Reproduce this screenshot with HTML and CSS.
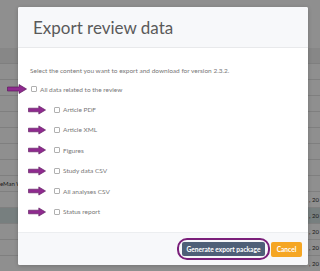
FILE: index.html
```html
<!DOCTYPE html>
<html lang="en">
<head>
    <meta charset="UTF-8">
    <meta name="viewport" content="width=device-width, initial-scale=1.0">
    <title>Export review data</title>
    <link rel="stylesheet" href="styles.css">
</head>
<body>
    <div class="page">
        <div class="topbar"></div>
        <div class="table">
            <div class="row head"><span class="cell-left"></span><span class="cell-right"></span></div>
            <div class="row"><span class="cell-left"></span><span class="cell-right"></span></div>
            <div class="row"><span class="cell-left"></span><span class="cell-right"></span></div>
            <div class="row"><span class="cell-left"></span><span class="cell-right"></span></div>
            <div class="row"><span class="cell-left"></span><span class="cell-right"></span></div>
            <div class="row"><span class="cell-left"></span><span class="cell-right"></span></div>
            <div class="row"><span class="cell-left"></span><span class="cell-right"></span></div>
            <div class="row"><span class="cell-left"></span><span class="cell-right"></span></div>
            <div class="row"><span class="cell-left">eMan W</span><span class="cell-right"></span></div>
            <div class="row"><span class="cell-left"></span><span class="cell-right">, 20</span></div>
            <div class="row selected"><span class="cell-left"></span><span class="cell-right">, 20</span></div>
            <div class="row"><span class="cell-left"></span><span class="cell-right">, 20</span></div>
            <div class="row"><span class="cell-left"></span><span class="cell-right">, 20</span></div>
            <div class="row"><span class="cell-left"></span><span class="cell-right">, 20</span></div>
        </div>
        <div class="backdrop"></div>
    </div>

    <div class="modal">
        <div class="modal-header">
            <h2>Export review data</h2>
        </div>
        <div class="modal-body">
            <p class="intro">Select the content you want to export and download for version 2.3.2.</p>
            <label class="option option-all">
                <svg class="arrow" viewBox="0 0 20 10"><path d="M0.5 3H12V0.5L19.5 5L12 9.5V7H0.5Z"/></svg>
                <span class="box"></span>
                <span>All data related to the review</span>
            </label>
            <label class="option">
                <svg class="arrow" viewBox="0 0 20 10"><path d="M0.5 3H12V0.5L19.5 5L12 9.5V7H0.5Z"/></svg>
                <span class="box"></span>
                <span>Article PDF</span>
            </label>
            <label class="option">
                <svg class="arrow" viewBox="0 0 20 10"><path d="M0.5 3H12V0.5L19.5 5L12 9.5V7H0.5Z"/></svg>
                <span class="box"></span>
                <span>Article XML</span>
            </label>
            <label class="option">
                <svg class="arrow" viewBox="0 0 20 10"><path d="M0.5 3H12V0.5L19.5 5L12 9.5V7H0.5Z"/></svg>
                <span class="box"></span>
                <span>Figures</span>
            </label>
            <label class="option">
                <svg class="arrow" viewBox="0 0 20 10"><path d="M0.5 3H12V0.5L19.5 5L12 9.5V7H0.5Z"/></svg>
                <span class="box"></span>
                <span>Study data CSV</span>
            </label>
            <label class="option">
                <svg class="arrow" viewBox="0 0 20 10"><path d="M0.5 3H12V0.5L19.5 5L12 9.5V7H0.5Z"/></svg>
                <span class="box"></span>
                <span>All analyses CSV</span>
            </label>
            <label class="option">
                <svg class="arrow" viewBox="0 0 20 10"><path d="M0.5 3H12V0.5L19.5 5L12 9.5V7H0.5Z"/></svg>
                <span class="box"></span>
                <span>Status report</span>
            </label>
        </div>
        <div class="modal-footer">
            <span class="highlight">
                <button class="btn btn-primary">Generate export package</button>
            </span>
            <button class="btn btn-cancel">Cancel</button>
        </div>
    </div>
</body>
</html>
```

FILE: styles.css
```css
* {
    box-sizing: border-box;
    margin: 0;
    padding: 0;
}

body {
    font-family: Lato, "Liberation Sans", Arial, sans-serif;
    width: 320px;
    height: 271px;
    overflow: hidden;
    position: relative;
    background-color: #fff;
    color: #333;
}

/* page behind the dialog */
.page {
    position: relative;
    height: 271px;
}

.topbar {
    height: 48px;
    background-color: #fff;
}

.table {
    display: flex;
    flex-direction: column;
}

.row {
    height: 16px;
    display: flex;
    align-items: center;
    justify-content: space-between;
    border-bottom: 1px solid #e2e2e2;
    font-size: 6px;
    white-space: nowrap;
}

.row.head {
    background-color: #f0f0f0;
}

.row.selected {
    background-color: #d5e2e2;
}

.cell-left {
    width: 30px;
}

.cell-right {
    width: 11px;
}

.backdrop {
    position: absolute;
    inset: 0;
    background-color: rgba(0, 0, 0, 0.44);
}

/* dialog */
.modal {
    position: absolute;
    left: 18px;
    top: 7px;
    width: 290px;
    height: 258px;
    background-color: #fff;
    border-radius: 2px;
    display: flex;
    flex-direction: column;
    box-shadow: 0 1px 4px rgba(0, 0, 0, 0.2);
}

.modal-header {
    height: 41px;
    padding-left: 15px;
    display: flex;
    align-items: center;
    background-color: #f7f8fa;
    border-bottom: 1px solid #e8e9eb;
    border-radius: 2px 2px 0 0;
}

.modal-header h2 {
    font-size: 17px;
    font-weight: 400;
    color: #5a5a5a;
}

.modal-body {
    flex: 1;
    padding: 18px 0 0 12px;
}

.intro {
    font-size: 6.5px;
    line-height: 10px;
    color: #777;
    margin-bottom: 3px;
}

.option {
    height: 20.4px;
    display: flex;
    align-items: center;
    font-size: 6.5px;
    color: #777;
    margin-left: -2px;
}

.option .arrow {
    width: 18px;
    height: 10px;
    margin-right: 8px;
}

.option-all {
    margin-left: -23px;
}

.option-all .arrow {
    width: 20px;
    margin-right: 4px;
}

.arrow path {
    fill: #8f2a8f;
    stroke: #5c1a5c;
    stroke-width: 0.7;
}

.box {
    width: 6px;
    height: 6px;
    border: 1px solid #b0b0b0;
    border-radius: 1px;
    background-color: #fff;
    margin-right: 3px;
}

.modal-footer {
    height: 33px;
    display: flex;
    align-items: center;
    justify-content: flex-end;
    gap: 1px;
    padding-right: 6px;
    background-color: #f7f8fa;
    border-top: 1px solid #eceef0;
    border-radius: 0 0 2px 2px;
}

.highlight {
    display: flex;
    padding: 2px 3px;
    border: 2px solid #7a1f7a;
    border-radius: 10px;
}

.btn {
    font-family: inherit;
    font-size: 6.6px;
    font-weight: 700;
    color: #fff;
    border: none;
    border-radius: 2px;
    height: 14px;
    padding: 0;
    white-space: nowrap;
}

.btn-primary {
    width: 83px;
    background-color: #4e5f77;
}

.btn-cancel {
    width: 31px;
    height: 15px;
    background-color: #f5a623;
}
```
